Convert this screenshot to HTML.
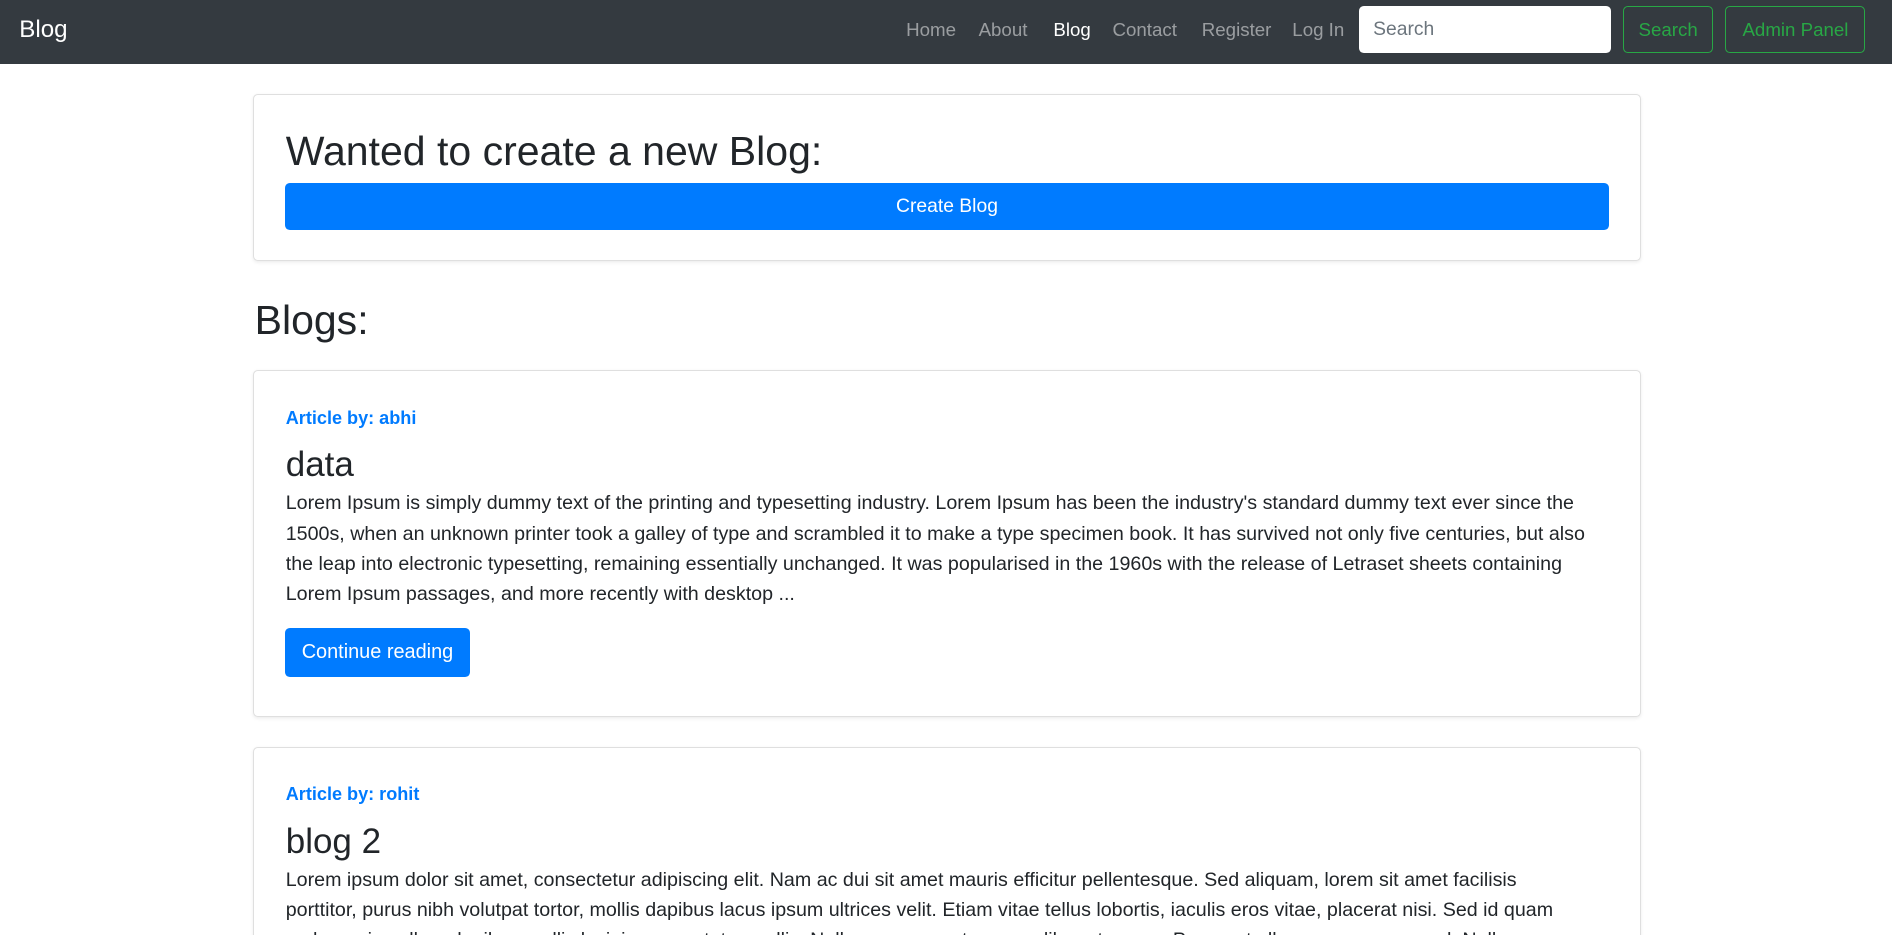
<!DOCTYPE html>
<html><head><meta charset="utf-8"><style>
html{zoom:1.20663;overflow:hidden}
body{margin:0;width:1568px;font-family:"Liberation Sans",sans-serif;color:#212529;background:#fff;overflow:hidden;height:775px;position:relative}
.nav{height:53px;background:#343a40;position:relative}
.brand{position:absolute;left:16px;top:13px;color:#fff;font-size:20px}
.l{position:absolute;top:16px;font-size:15.5px;color:rgba(255,255,255,.5);white-space:nowrap}
.sin{position:absolute;left:1126px;top:5px;width:209px;height:39px;background:#fff;border-radius:4px;box-sizing:border-box;padding:11px 12px;color:#6c757d;font-size:16px}
.ob{position:absolute;top:5px;height:39px;box-sizing:border-box;border:1px solid #28a745;border-radius:4px;color:#28a745;font-size:15.5px;padding:10px 0;text-align:center;white-space:nowrap}
.card{position:absolute;left:210px;width:1150px;border:1px solid #dfdfdf;border-radius:4px;box-shadow:0 1px 3px rgba(0,0,0,.08);box-sizing:border-box}
.h{position:absolute;font-size:34px;font-weight:500;line-height:1;white-space:nowrap}
.btn{position:absolute;background:#007bff;color:#fff;border-radius:4px;font-size:16px;text-align:center}
.by{position:absolute;left:26px;color:#007bff;font-weight:bold;font-size:15px}
.t{position:absolute;left:26px;font-size:29px;line-height:1}
.p{position:absolute;left:26px;width:1110px;font-size:16.3px;line-height:25px;white-space:nowrap}
</style></head><body>
<div class="nav">
<div class="brand">Blog</div>
<div class="l" style="left:751px">Home</div>
<div class="l" style="left:811px">About</div>
<div class="l" style="left:873px;color:#fff">Blog</div>
<div class="l" style="left:922px">Contact</div>
<div class="l" style="left:996px">Register</div>
<div class="l" style="left:1071px">Log In</div>
<div class="sin">Search</div>
<div class="ob" style="left:1345px;width:75px">Search</div>
<div class="ob" style="left:1430px;width:116px">Admin Panel</div>
</div>
<div class="card" style="top:78px;height:138px">
<div class="h" style="left:26px;top:30px">Wanted to create a new Blog:</div>
<div class="btn" style="left:25px;top:73px;width:1098px;height:39px;line-height:39px">Create Blog</div>
</div>
<div class="h" style="left:211px;top:249px">Blogs:</div>
<div class="card" style="top:307px;height:287px">
<div class="by" style="top:30px">Article by: abhi</div>
<div class="t" style="top:63px">data</div>
<div class="p" style="top:97px">Lorem Ipsum is simply dummy text of the printing and typesetting industry. Lorem Ipsum has been the industry's standard dummy text ever since the<br>1500s, when an unknown printer took a galley of type and scrambled it to make a type specimen book. It has survived not only five centuries, but also<br>the leap into electronic typesetting, remaining essentially unchanged. It was popularised in the 1960s with the release of Letraset sheets containing<br>Lorem Ipsum passages, and more recently with desktop ...</div>
<div class="btn" style="left:25px;top:213px;width:154px;height:40px;line-height:40px;font-size:16.5px">Continue reading</div>
</div>
<div class="card" style="top:619px;height:300px">
<div class="by" style="top:30px">Article by: rohit</div>
<div class="t" style="top:63px">blog 2</div>
<div class="p" style="top:97px">Lorem ipsum dolor sit amet, consectetur adipiscing elit. Nam ac dui sit amet mauris efficitur pellentesque. Sed aliquam, lorem sit amet facilisis<br>porttitor, purus nibh volutpat tortor, mollis dapibus lacus ipsum ultrices velit. Etiam vitae tellus lobortis, iaculis eros vitae, placerat nisi. Sed id quam<br>sed mauris nullam dapibus mollis lacinia consectetur mollis. Nullam consequat semper libero tempus. Praesent ullamcorper quam sed. Nulla</div>
</div>
</body></html>
